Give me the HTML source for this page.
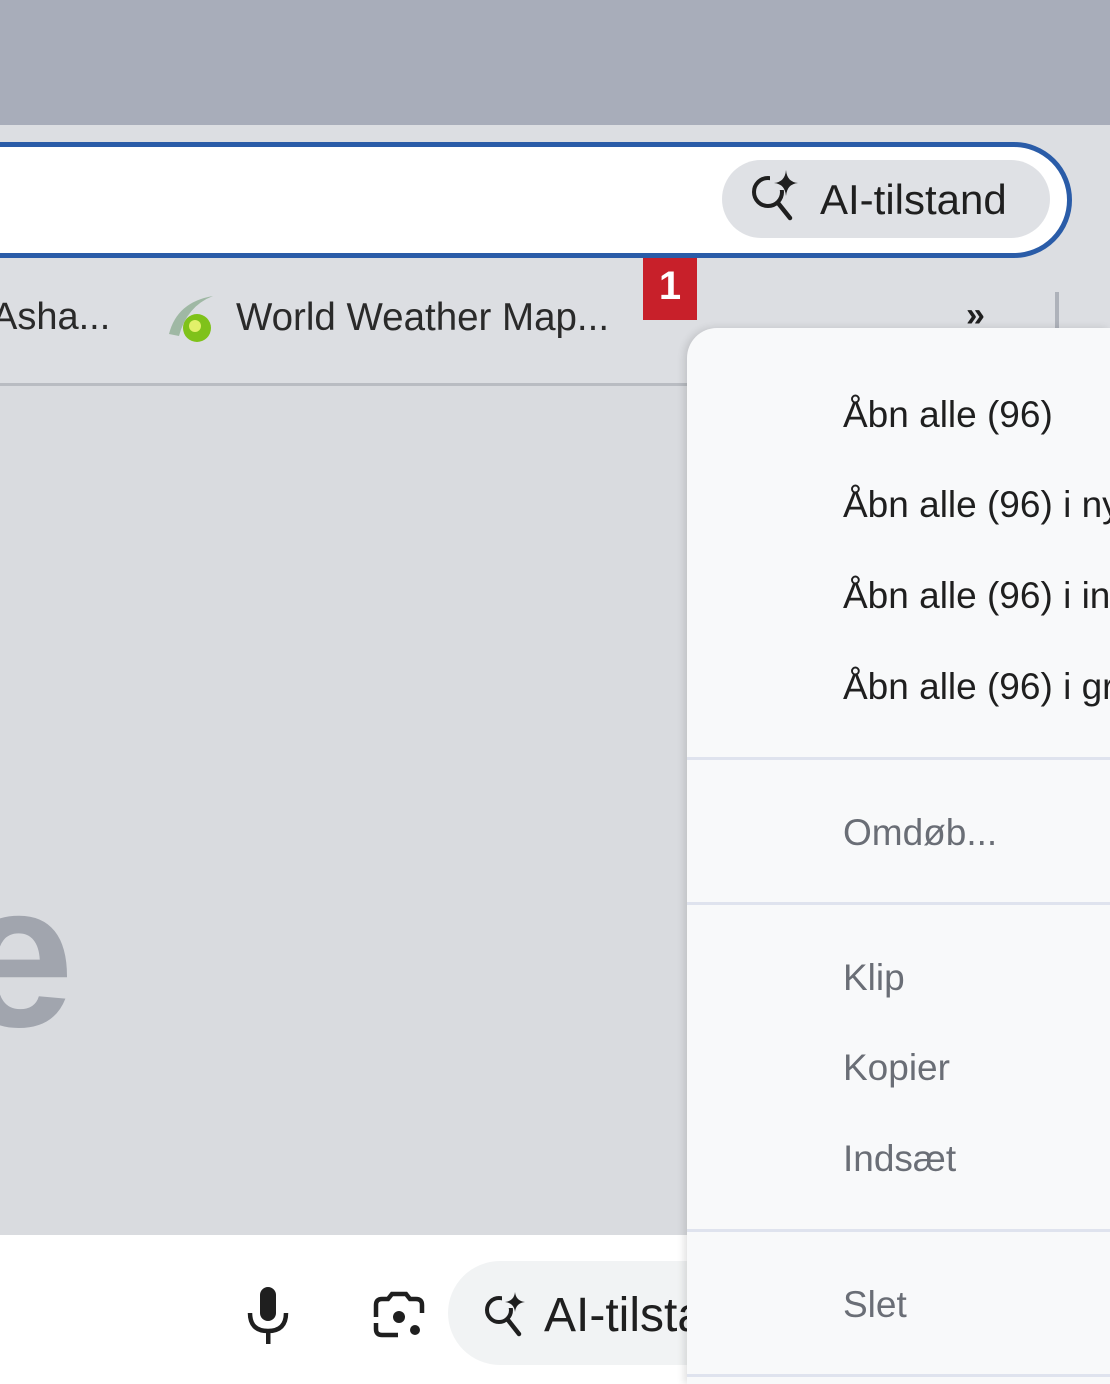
<!DOCTYPE html>
<html><head><style>
*{margin:0;padding:0;box-sizing:border-box}
html,body{width:1110px;height:1384px;overflow:hidden}
body{position:relative;background:#d9dbdf;font-family:"Liberation Sans",sans-serif}
.abs{position:absolute}
.t{position:absolute;white-space:nowrap;font-size:37px;color:#1f1f1f}
.g{color:#6a6e76}
.div{position:absolute;left:0;right:0;height:3px;background:#dfe3ee}
</style></head><body>
<div class="abs" style="left:0;top:0;width:1110px;height:125px;background:#a8adba"></div>
<div class="abs" style="left:0;top:125px;width:1110px;height:260px;background:#dcdee2"></div>
<div class="abs" style="left:-60px;top:142px;width:1132px;height:116px;background:#fff;border:5px solid #2a5ca8;border-radius:58px"></div>
<div class="abs" style="left:722px;top:160px;width:328px;height:78px;background:#dfe1e5;border-radius:39px"></div>
<svg class="abs" style="left:748px;top:168px" width="56" height="58" viewBox="0 0 56 58"><circle cx="20" cy="24" r="14" fill="none" stroke="#1f1f1f" stroke-width="4"/><path d="M30 35 L42 50" stroke="#1f1f1f" stroke-width="4.5" stroke-linecap="round"/><rect x="22" y="8" width="18" height="14" fill="#dfe1e5"/><path d="M38 2 Q39 14 50 15 Q39 16 38 28 Q37 16 26 15 Q37 14 38 2Z" fill="#1f1f1f"/></svg>
<div class="t" style="left:820px;top:176px;font-size:42px">AI-tilstand</div>
<div class="abs" style="left:643px;top:258px;width:54px;height:62px;background:#c8202a;color:#fff;font-size:40px;font-weight:bold;text-align:center;line-height:56px">1</div>
<div class="t" style="left:-8px;top:296px;font-size:38px;color:#2a2a2a">Asha...</div>
<svg class="abs" style="left:165px;top:292px" width="52" height="54" viewBox="0 0 52 54"><path d="M4 42 Q12 10 48 4 Q22 14 14 44Z" fill="#9fb8a4"/><circle cx="32" cy="36" r="14" fill="#7fc21a"/><circle cx="30" cy="34" r="6" fill="#e2f06a"/></svg>
<div class="t" style="left:236px;top:296px;font-size:38.5px;color:#2a2a2a">World Weather Map...</div>
<div class="t" style="left:966px;top:296px;font-size:34px;font-weight:bold">»</div>
<div class="abs" style="left:1055px;top:292px;width:4px;height:40px;background:#aeb2ba"></div>
<div class="abs" style="left:0;top:383px;width:690px;height:3px;background:#b9bcc2"></div>
<div class="t" style="left:-40px;top:838px;font-size:205px;font-weight:bold;color:#a1a5ae">e</div>
<div class="abs" style="left:0;top:1235px;width:1110px;height:149px;background:#fff"></div>
<svg class="abs" style="left:245px;top:1285px" width="46" height="62" viewBox="0 0 46 62"><rect x="15" y="2" width="16" height="34" rx="8" fill="#1f1f1f"/><path d="M5 28 Q5 46 23 46 Q41 46 41 28" fill="none" stroke="#1f1f1f" stroke-width="4.5"/><rect x="21" y="45" width="4.5" height="14" fill="#1f1f1f"/></svg>
<svg class="abs" style="left:370px;top:1287px" width="58" height="56" viewBox="0 0 58 56"><path d="M6 30 V18 Q6 12 12 12 H18 L22 7 H36 L40 12 H46 Q52 12 52 18 V26" fill="none" stroke="#1f1f1f" stroke-width="4.5"/><path d="M6 36 V42 Q6 48 12 48 H28" fill="none" stroke="#1f1f1f" stroke-width="4.5"/><circle cx="29" cy="30" r="6" fill="#1f1f1f"/><circle cx="45" cy="43" r="5" fill="#1f1f1f"/></svg>
<div class="abs" style="left:448px;top:1261px;width:300px;height:104px;background:#f1f3f4;border-radius:52px"></div>
<svg class="abs" style="left:482px;top:1290px" width="48" height="52" viewBox="0 0 48 52"><circle cx="17" cy="20" r="12" fill="none" stroke="#1f1f1f" stroke-width="4"/><path d="M26 30 L37 44" stroke="#1f1f1f" stroke-width="4.5" stroke-linecap="round"/><rect x="20" y="4" width="16" height="14" fill="#f1f3f4"/><path d="M33 2 Q34 11 43 12 Q34 13 33 22 Q32 13 23 12 Q32 11 33 2Z" fill="#1f1f1f"/></svg>
<div class="t" style="left:544px;top:1288px;font-size:48px">AI-tilstand</div>
<div class="abs" style="left:687px;top:328px;width:423px;height:1056px;overflow:hidden;background:#f8f9fa;border-radius:30px 0 0 0;box-shadow:-3px 0 8px rgba(0,0,0,.12)">
<div class="t" style="left:156px;top:66px">Åbn alle (96)</div>
<div class="t" style="left:156px;top:156px">Åbn alle (96) i nyt vindue</div>
<div class="t" style="left:156px;top:247px">Åbn alle (96) i inkognito</div>
<div class="t" style="left:156px;top:338px">Åbn alle (96) i gruppe</div>
<div class="div" style="top:429px"></div>
<div class="t g" style="left:156px;top:484px">Omdøb...</div>
<div class="div" style="top:574px"></div>
<div class="t g" style="left:156px;top:629px">Klip</div>
<div class="t g" style="left:156px;top:719px">Kopier</div>
<div class="t g" style="left:156px;top:810px">Indsæt</div>
<div class="div" style="top:901px"></div>
<div class="t g" style="left:156px;top:956px">Slet</div>
<div class="div" style="top:1046px"></div>
</div>
</body></html>
